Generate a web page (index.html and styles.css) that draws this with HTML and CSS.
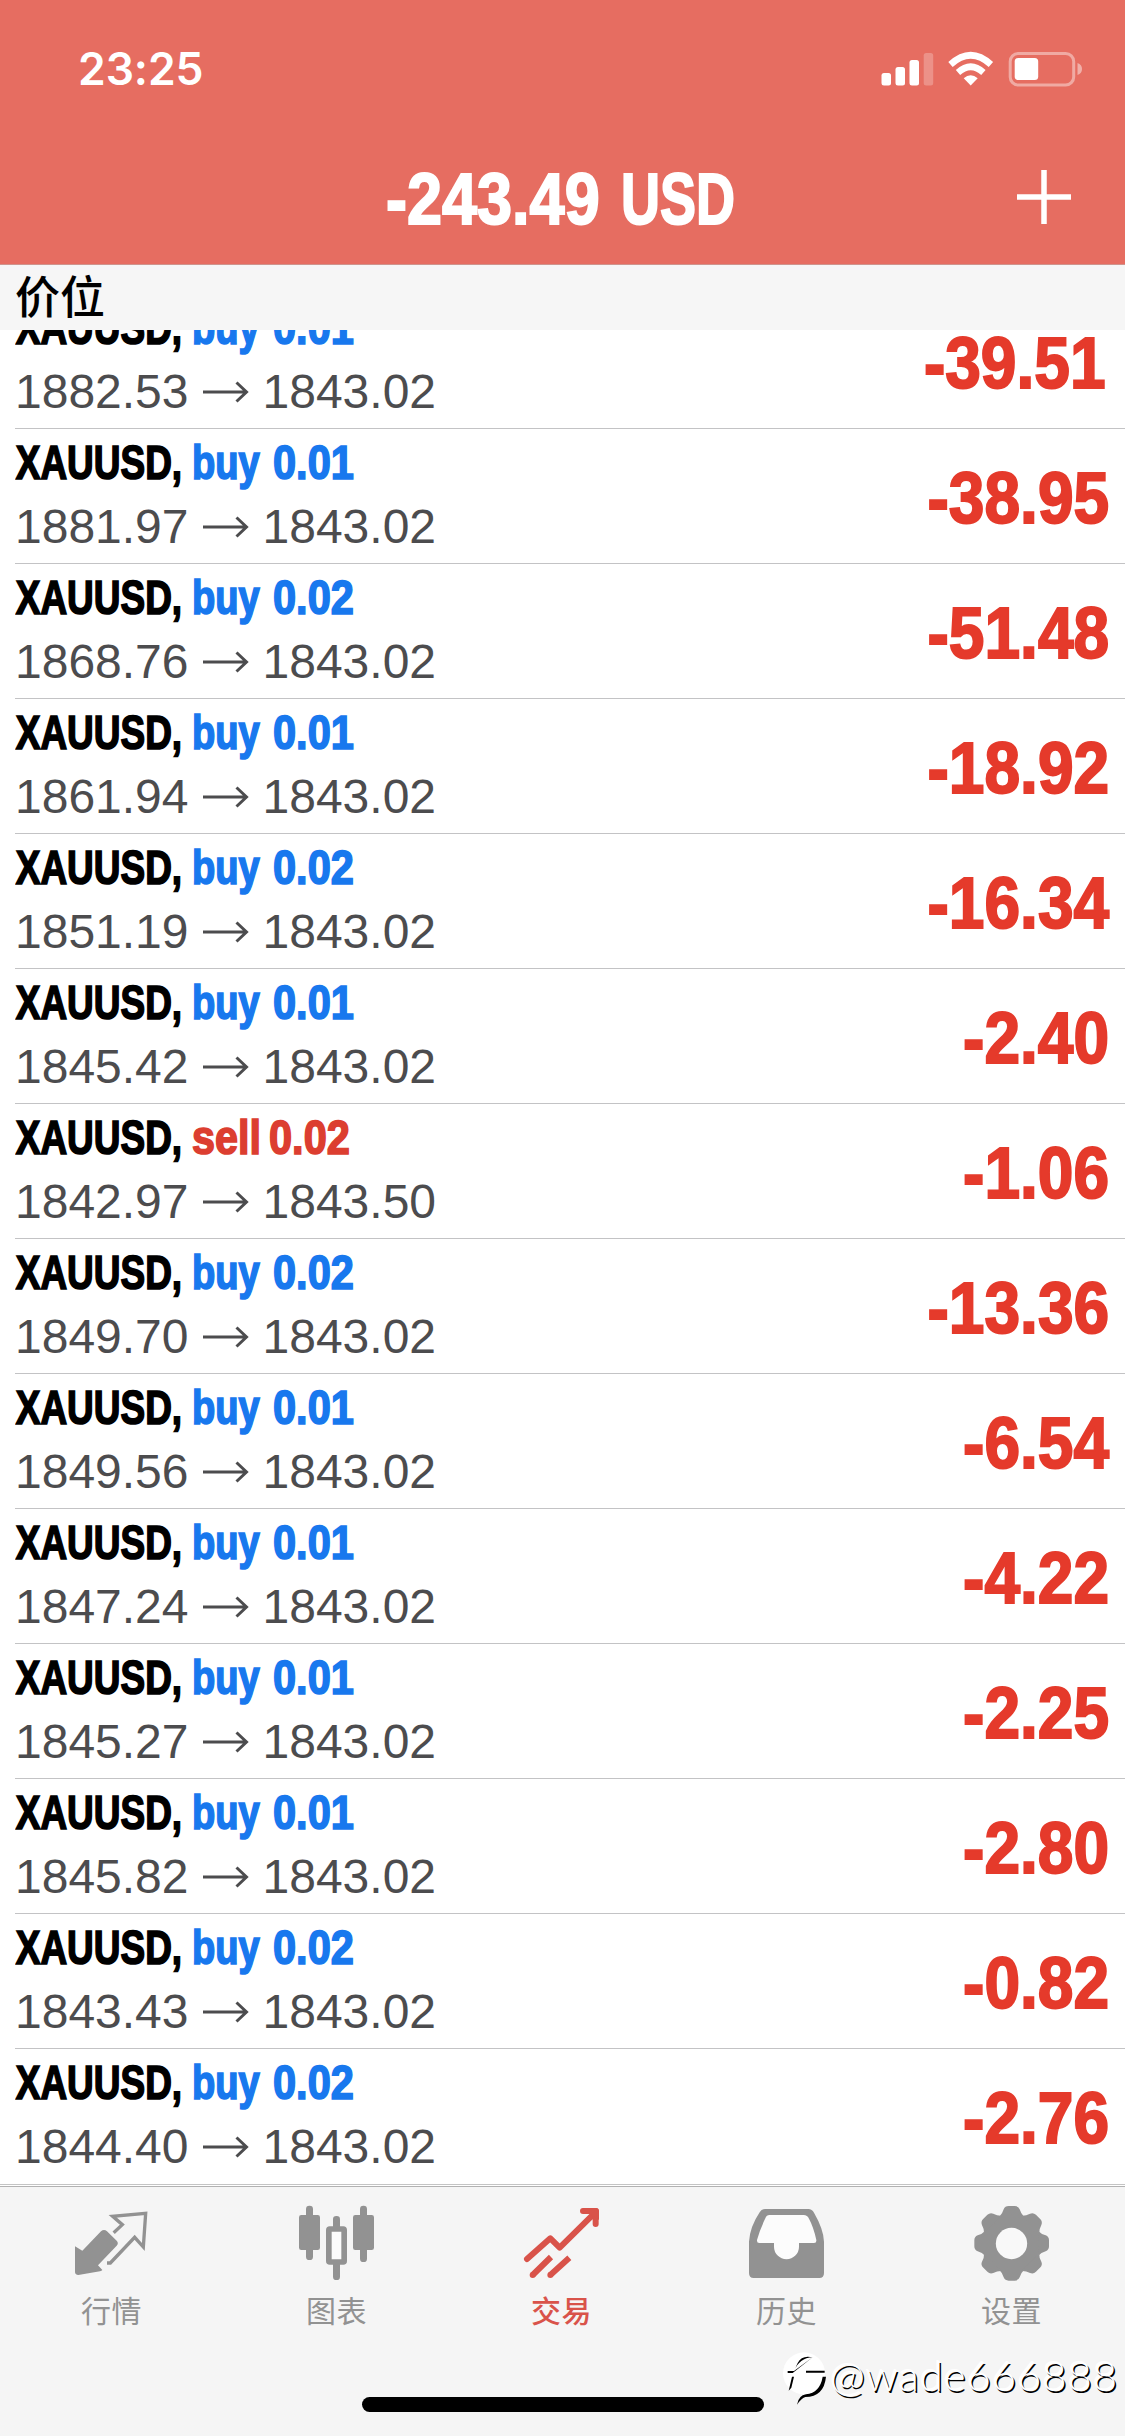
FILE: index.html
```html
<!DOCTYPE html>
<html lang="zh-CN">
<head>
<meta charset="utf-8">
<title>交易</title>
<link rel="stylesheet" href="styles.css">
</head>
<body>
<div class="screen">
  <header class="header">
    <div class="status">
      <span class="time">23:25</span>
      <svg class="status-icons" width="204" height="40" viewBox="880 49 204 40">
        <g fill="#fff">
          <rect x="881.5" y="73" width="9.5" height="12.5" rx="2.5"/>
          <rect x="895.5" y="67" width="9.5" height="18.5" rx="2.5"/>
          <rect x="909.5" y="60" width="9.5" height="25.5" rx="2.5"/>
          <rect x="923.7" y="53" width="9.5" height="32.5" rx="2.5" opacity=".25"/>
          <path d="M970.7 85.5l-7-7.2q7-6.3 14 0z"/>
          <rect x="1014.7" y="58" width="23.5" height="22" rx="3.5"/>
          <path d="M1077.500 63q4.500 1.500 4.500 6t-4.500 6z" opacity=".45"/>
        </g>
        <path d="M950.500 64.500q20.200-18.500 40.400 0M958 72.500q12.700-11.500 25.400 0" fill="none" stroke="#fff" stroke-width="6.500"/>
        <rect x="1010.200" y="53.500" width="63.500" height="31.500" rx="8" fill="none" stroke="#fff" stroke-opacity=".42" stroke-width="3"/>
      </svg>
    </div>
    <div class="nav">
      <h1 class="title"><span class="title-num">-243.49</span><span class="title-cur">USD</span></h1>
      <svg class="add" width="56" height="56" viewBox="0 0 56 56"><path d="M28 1v54M1 28h54" stroke="#fff" stroke-width="5.500"/></svg>
    </div>
  </header>
  <div class="section">价位</div>
  <main class="list">
    <div class="row first"><div class="info"><div class="deal"><b class="sym">XAUUSD,</b><b class="side buy">buy</b><b class="vol buy">0.01</b></div><div class="prices"><span>1882.53</span><svg class="arrow" viewBox="0 0 46 24"><path d="M0 12h43M33.500 2.500L43.500 12L33.500 21.500"/></svg><span>1843.02</span></div></div><div class="profit ends-one">-39.51</div></div>
    <div class="row"><div class="info"><div class="deal"><b class="sym">XAUUSD,</b><b class="side buy">buy</b><b class="vol buy">0.01</b></div><div class="prices"><span>1881.97</span><svg class="arrow" viewBox="0 0 46 24"><path d="M0 12h43M33.500 2.500L43.500 12L33.500 21.500"/></svg><span>1843.02</span></div></div><div class="profit">-38.95</div></div>
    <div class="row"><div class="info"><div class="deal"><b class="sym">XAUUSD,</b><b class="side buy">buy</b><b class="vol buy">0.02</b></div><div class="prices"><span>1868.76</span><svg class="arrow" viewBox="0 0 46 24"><path d="M0 12h43M33.500 2.500L43.500 12L33.500 21.500"/></svg><span>1843.02</span></div></div><div class="profit">-51.48</div></div>
    <div class="row"><div class="info"><div class="deal"><b class="sym">XAUUSD,</b><b class="side buy">buy</b><b class="vol buy">0.01</b></div><div class="prices"><span>1861.94</span><svg class="arrow" viewBox="0 0 46 24"><path d="M0 12h43M33.500 2.500L43.500 12L33.500 21.500"/></svg><span>1843.02</span></div></div><div class="profit">-18.92</div></div>
    <div class="row"><div class="info"><div class="deal"><b class="sym">XAUUSD,</b><b class="side buy">buy</b><b class="vol buy">0.02</b></div><div class="prices"><span>1851.19</span><svg class="arrow" viewBox="0 0 46 24"><path d="M0 12h43M33.500 2.500L43.500 12L33.500 21.500"/></svg><span>1843.02</span></div></div><div class="profit">-16.34</div></div>
    <div class="row"><div class="info"><div class="deal"><b class="sym">XAUUSD,</b><b class="side buy">buy</b><b class="vol buy">0.01</b></div><div class="prices"><span>1845.42</span><svg class="arrow" viewBox="0 0 46 24"><path d="M0 12h43M33.500 2.500L43.500 12L33.500 21.500"/></svg><span>1843.02</span></div></div><div class="profit">-2.40</div></div>
    <div class="row"><div class="info"><div class="deal"><b class="sym">XAUUSD,</b><b class="side sell">sell</b><b class="vol sell">0.02</b></div><div class="prices"><span>1842.97</span><svg class="arrow" viewBox="0 0 46 24"><path d="M0 12h43M33.500 2.500L43.500 12L33.500 21.500"/></svg><span>1843.50</span></div></div><div class="profit">-1.06</div></div>
    <div class="row"><div class="info"><div class="deal"><b class="sym">XAUUSD,</b><b class="side buy">buy</b><b class="vol buy">0.02</b></div><div class="prices"><span>1849.70</span><svg class="arrow" viewBox="0 0 46 24"><path d="M0 12h43M33.500 2.500L43.500 12L33.500 21.500"/></svg><span>1843.02</span></div></div><div class="profit">-13.36</div></div>
    <div class="row"><div class="info"><div class="deal"><b class="sym">XAUUSD,</b><b class="side buy">buy</b><b class="vol buy">0.01</b></div><div class="prices"><span>1849.56</span><svg class="arrow" viewBox="0 0 46 24"><path d="M0 12h43M33.500 2.500L43.500 12L33.500 21.500"/></svg><span>1843.02</span></div></div><div class="profit">-6.54</div></div>
    <div class="row"><div class="info"><div class="deal"><b class="sym">XAUUSD,</b><b class="side buy">buy</b><b class="vol buy">0.01</b></div><div class="prices"><span>1847.24</span><svg class="arrow" viewBox="0 0 46 24"><path d="M0 12h43M33.500 2.500L43.500 12L33.500 21.500"/></svg><span>1843.02</span></div></div><div class="profit">-4.22</div></div>
    <div class="row"><div class="info"><div class="deal"><b class="sym">XAUUSD,</b><b class="side buy">buy</b><b class="vol buy">0.01</b></div><div class="prices"><span>1845.27</span><svg class="arrow" viewBox="0 0 46 24"><path d="M0 12h43M33.500 2.500L43.500 12L33.500 21.500"/></svg><span>1843.02</span></div></div><div class="profit">-2.25</div></div>
    <div class="row"><div class="info"><div class="deal"><b class="sym">XAUUSD,</b><b class="side buy">buy</b><b class="vol buy">0.01</b></div><div class="prices"><span>1845.82</span><svg class="arrow" viewBox="0 0 46 24"><path d="M0 12h43M33.500 2.500L43.500 12L33.500 21.500"/></svg><span>1843.02</span></div></div><div class="profit">-2.80</div></div>
    <div class="row"><div class="info"><div class="deal"><b class="sym">XAUUSD,</b><b class="side buy">buy</b><b class="vol buy">0.02</b></div><div class="prices"><span>1843.43</span><svg class="arrow" viewBox="0 0 46 24"><path d="M0 12h43M33.500 2.500L43.500 12L33.500 21.500"/></svg><span>1843.02</span></div></div><div class="profit">-0.82</div></div>
    <div class="row last"><div class="info"><div class="deal"><b class="sym">XAUUSD,</b><b class="side buy">buy</b><b class="vol buy">0.02</b></div><div class="prices"><span>1844.40</span><svg class="arrow" viewBox="0 0 46 24"><path d="M0 12h43M33.500 2.500L43.500 12L33.500 21.500"/></svg><span>1843.02</span></div></div><div class="profit">-2.76</div></div>
  </main>
  <nav class="tabs">
    <div class="tab">
      <svg class="tab-icon" viewBox="0 51 675 300">
        <path d="M225 229L247 242L303 184Q312 176 321 184L350 212Q357 219 350 227L294 286L307 300Q305 303 300 304L235 315Q225 314 225 306Z" fill="currentColor"/>
        <path d="M341 188L367 164L338 139L437 130L430 231L404 202L331 279H321" fill="none" stroke="currentColor" stroke-width="10"/>
      </svg>
      <span>行情</span>
    </div>
    <div class="tab">
      <svg class="tab-icon" viewBox="0 51 675 300">
        <g fill="currentColor">
          <rect x="222" y="135" width="63" height="105" rx="7"/><rect x="243" y="107" width="21" height="163" rx="10"/>
          <rect x="384" y="135" width="63" height="105" rx="7"/><rect x="405" y="107" width="21" height="169" rx="10"/>
          <rect x="324" y="138" width="21" height="46" rx="10"/><rect x="324" y="270" width="21" height="60" rx="10"/>
        </g>
        <rect x="311.500" y="177" width="46" height="99" rx="3" fill="#fcfcfc" stroke="currentColor" stroke-width="17"/>
      </svg>
      <span>图表</span>
    </div>
    <div class="tab active">
      <svg class="tab-icon" viewBox="0 51 675 300">
        <g fill="none" stroke="currentColor" stroke-width="18" stroke-linecap="round" stroke-linejoin="round">
          <path d="M231 267L301 205L329 233L436 127M399 123H437V162"/>
          <path d="M397 114H438Q447 114 447 123V150L425 136Z" fill="currentColor" stroke="none"/>
          <path d="M248 315L303 261M301 315L358 263" stroke-linecap="butt"/>
          <path d="M248 315h.1M301 315h.1"/>
        </g>
      </svg>
      <span>交易</span>
    </div>
    <div class="tab">
      <svg class="tab-icon" viewBox="0 51 675 300">
        <path d="M270 117H400Q411 117 417 128Q446 178 447 215V309Q447 324 433 324H236Q222 324 222 309V215Q225 170 254 127Q260 117 270 117Z" fill="currentColor"/>
        <path d="M283 135H386Q397 135 402 146Q416 172 424 210Q425 219 417 219H372V230A37 37 0 0 1 297 230V219H253Q245 219 246 210Q254 180 271 145Q275 135 283 135Z" fill="#fcfcfc"/>
      </svg>
      <span>历史</span>
    </div>
    <div class="tab">
      <svg class="tab-icon" viewBox="0 51 675 300">
        <g fill="currentColor">
          <circle cx="335" cy="220" r="88"/>
          <path id="tooth" d="M298 140Q307 132 311 118Q315 108 326 108H344Q355 108 359 118Q363 132 372 140Z"/>
          <use href="#tooth" transform="rotate(45 335 220)"/><use href="#tooth" transform="rotate(90 335 220)"/><use href="#tooth" transform="rotate(135 335 220)"/><use href="#tooth" transform="rotate(180 335 220)"/><use href="#tooth" transform="rotate(225 335 220)"/><use href="#tooth" transform="rotate(270 335 220)"/><use href="#tooth" transform="rotate(315 335 220)"/>
        </g>
        <circle cx="334.500" cy="220.500" r="47" fill="#f8f8f8"/>
      </svg>
      <span>设置</span>
    </div>
  </nav>
  <div class="home-bar"></div>
  <div class="watermark">
    <svg width="50" height="56" viewBox="180 545 150 168">
      <circle cx="252" cy="612" r="63" fill="#fff"/>
      <path d="M278 564Q246 556 233 581L222 605H203V611H218M222 605Q238 566 278 564ZM222 622L214 655L206 664L216 622Z"/>
      <path d="M258 604H314V610H258ZM308 622H318Q312 682 256 683Q243 688 231 706Q236 678 258 675Q300 670 308 622Z"/>
    </svg>
    <span>@wade666888</span>
  </div>
</div>
</body>
</html>
```
FILE: styles.css
```css
* { box-sizing: border-box; }
body {
  margin: 0;
  background: #fff;
  font-family: "Liberation Sans", "Noto Sans CJK SC", sans-serif;
}
.screen {
  position: relative;
  width: 1125px;
  height: 2436px;
  overflow: hidden;
  background: #fff;
}
.header {
  height: 265px;
  background: #e66d61;
  border-bottom: 1px solid #cf948d;
  color: #fff;
}
.status {
  display: flex;
  justify-content: space-between;
  align-items: center;
  height: 138px;
  padding: 0 41px 0 78px;
}
.time {
  font: 600 44.5px/60px Inter, sans-serif;
  letter-spacing: -0.1px;
}
.nav {
  display: flex;
  justify-content: space-between;
  height: 118px;
  padding: 0 53px 0 386px;
}
.title {
  display: flex;
  margin: 0;
  font-size: 72px;
  line-height: 122px;
  -webkit-text-stroke: 2px;
}
.title-num {
  width: 235px;
  transform: scaleX(.875);
  transform-origin: left;
}
.title-cur {
  width: 120px;
  transform: scaleX(.75);
  transform-origin: left;
}
.add { margin-top: 31px; }
.section {
  height: 65px;
  padding-left: 15px;
  background: #f6f6f6;
  font: 500 45px/60px "Noto Sans CJK SC", sans-serif;
  color: #000;
}
.list {
  height: 1854px;
  padding-left: 15px;
  overflow: hidden;
}
.row {
  display: flex;
  justify-content: space-between;
  height: 135px;
  border-bottom: 1px solid #c3c3c5;
}
.first { margin-top: -36px; }
.last { border-bottom: 0; }
.info { padding-top: 4px; }
.deal {
  display: flex;
  height: 60px;
  font-size: 48px;
  line-height: 60px;
  -webkit-text-stroke: 1.7px;
}
.deal b {
  transform: scaleX(.77);
  transform-origin: left;
  white-space: nowrap;
}
.deal .sym { width: 177px; padding-left: 1px; }
.deal .side { width: 81px; transform: scaleX(.795); }
.deal .vol { transform: scaleX(.865); }
.deal .side.sell { width: 77px; transform: scaleX(.86); }
.buy { color: #1878ee; }
.sell { color: #dc3e30; }
.prices {
  display: flex;
  align-items: center;
  font-size: 48px;
  line-height: 67px;
  color: #4c4c4e;
}
.arrow {
  width: 46px;
  height: 24px;
  margin: 0 14px;
  fill: none;
  stroke: currentColor;
  stroke-width: 3;
}
.profit {
  padding: 2px 16px 0 0;
  font-size: 72px;
  font-weight: bold;
  line-height: 134px;
  color: #e53a2b;
  transform: scaleX(.89);
  transform-origin: calc(100% - 16px) 50%;
  -webkit-text-stroke: 2px;
}
.profit.ends-one { padding-right: 20px; }
.tabs {
  display: grid;
  grid-template-columns: repeat(5, 225px);
  height: 252px;
  border-top: 1px solid #b2b2b2;
  outline: 1px solid #fff;
  box-shadow: 0 -2px 0 #c4c4c4;
  margin-top: 2px;
  background: #f5f5f5;
  position: relative;
}
.tab {
  display: flex;
  flex-direction: column;
  align-items: center;
  color: #929292;
  font: 400 30px/45px "Noto Sans CJK SC", sans-serif;
}
.tab span { margin-right: 2px; letter-spacing: .6px; }
.tab-icon { width: 225px; height: 100px; }
.active { color: #d9534a; }
.active span { font-weight: 500; }
.home-bar {
  position: absolute;
  left: 362px;
  top: 2397px;
  width: 402px;
  height: 15px;
  border-radius: 8px;
  background: #000;
}
.watermark {
  position: absolute;
  left: 780px;
  top: 2351px;
  display: flex;
  font: 300 42px/49px Lato, sans-serif;
  letter-spacing: .9px;
  color: #fff;
  text-shadow: 1.5px 1.5px 0 #000, -1px -1px 0 #fff;
}
```
